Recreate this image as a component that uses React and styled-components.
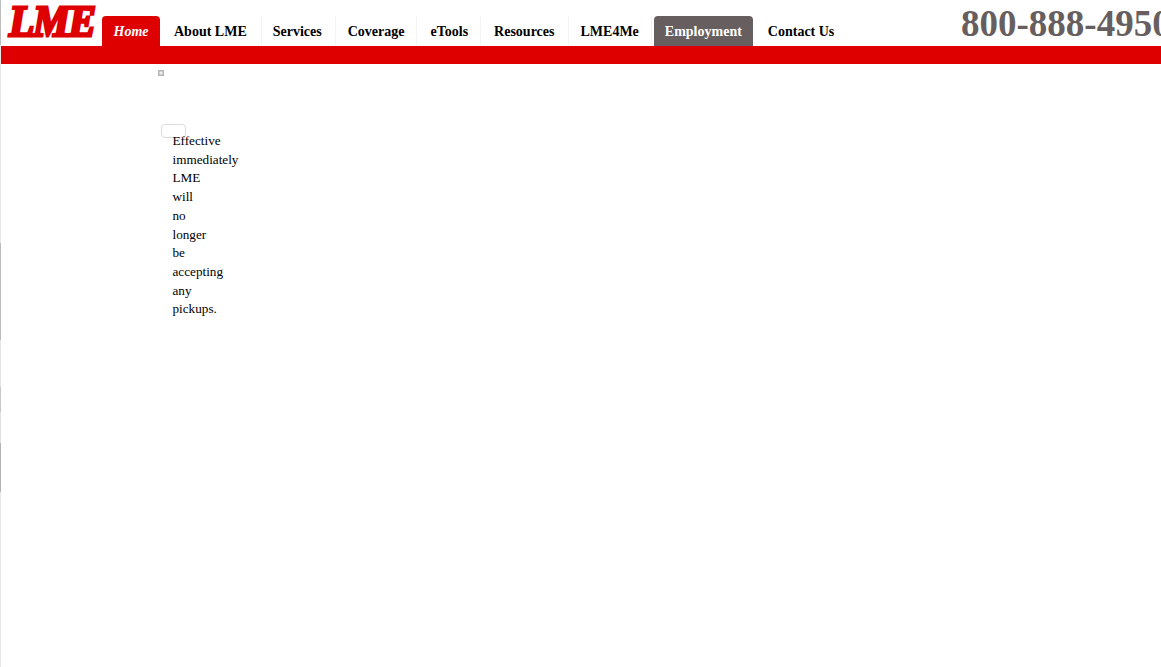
import React from "react";
import styled, { createGlobalStyle } from "styled-components";

const Global = createGlobalStyle`
  html, body { margin: 0; padding: 0; background: #fff; height: 100%; overflow: hidden; }
  body { font-family: "Liberation Serif", "Times New Roman", serif; color: #000; }
`;

const Page = styled.div`
  width: 1161px;
  height: 667px;
  overflow: hidden;
  box-sizing: border-box;
  border-left: 1px solid transparent;
  border-image: linear-gradient(
      to bottom,
      #bdbdbd 0 46px,
      #e8e8e8 46px 243px,
      #bbbbbb 243px 340px,
      #e4e4e4 340px 387px,
      #c8c8c8 387px 412px,
      #e0e0e0 412px 443px,
      #b4b4b4 443px 492px,
      #e8e8e8 492px 667px
    )
    1;
`;

const Header = styled.header`
  height: 46px;
  display: flex;
  align-items: flex-end;
  position: relative;
`;

const Logo = styled.div`
  width: 101px;
  height: 46px;
  flex: none;
`;

const Logotype = styled.span`
  display: inline-block;
  font: italic 700 47px/38px "Liberation Serif", serif;
  letter-spacing: -1.5px;
  color: #de0000;
  -webkit-text-stroke: 3px #de0000;
  white-space: nowrap;
  transform: translate(8px, 3px) scale(0.88, 0.94);
  transform-origin: 0 0;
`;

const Nav = styled.nav`
  display: flex;
  align-items: flex-end;
  height: 30px;
`;

const Tab = styled.a`
  height: 30px;
  box-sizing: border-box;
  padding: 1px ${(p) => p.$right}px 0 ${(p) => p.$left}px;
  display: flex;
  align-items: center;
  font-size: 14px;
  font-weight: 700;
  font-style: ${(p) => (p.$active ? "italic" : "normal")};
  white-space: nowrap;
  text-decoration: none;
  color: ${(p) => (p.$active || p.$hover ? "#fff" : "#000")};
  background: ${(p) => (p.$active ? "#de0000" : p.$hover ? "#675f5f" : "transparent")};
  border-radius: ${(p) => (p.$active || p.$hover ? "4px 4px 0 0" : "0")};
  margin-right: ${(p) => p.$gap ?? 0}px;
  border-right: ${(p) => (p.$sep ? "1px solid #f4f4f4" : "none")};
`;

const Phone = styled.div`
  position: absolute;
  left: 960px;
  top: 3px;
  font-size: 37px;
  line-height: 42px;
  font-weight: 700;
  color: #675f5f;
  white-space: nowrap;
`;

const RedBar = styled.div`
  height: 18px;
  background: #de0000;
`;

const Content = styled.main`
  padding: 6px 0 0 157px;
  position: relative;
`;

const BrokenImage = styled.svg`
  display: block;
  width: 6px;
  height: 6px;
`;

const Notice = styled.p`
  position: relative;
  margin: 56px 0 0;
  padding: 0 0 0 14.5px;
  width: 67px;
  word-spacing: 67px;
  font-size: 13.2px;
  line-height: 18.7px;
`;

const EmptyBox = styled.div`
  position: absolute;
  left: 160px;
  top: 60px;
  width: 25px;
  height: 14px;
  box-sizing: border-box;
  border: 1.5px solid #dcdcdc;
  border-radius: 4px;
`;

const items = [
  ["About LME", { $sep: true, $left: 14, $right: 14 }],
  ["Services", { $sep: true, $left: 11, $right: 13 }],
  ["Coverage", { $sep: true, $left: 12, $right: 12 }],
  ["eTools", { $sep: true, $left: 13, $right: 12 }],
  ["Resources", { $sep: true, $left: 13, $right: 13 }],
  ["LME4Me", { $sep: true, $left: 12, $right: 12, $gap: 2 }],
  ["Employment", { $hover: true, $left: 11, $right: 11 }],
  ["Contact Us", { $left: 15, $right: 15 }],
];

export default function App() {
  return (
    <Page>
      <Global />
      <Header>
        <Logo>
          <Logotype>LME</Logotype>
        </Logo>
        <Nav>
          <Tab href="#" $active $left={11.5} $right={11.5}>Home</Tab>
          {items.map(([label, props]) => (
            <Tab href="#" key={label} {...props}>{label}</Tab>
          ))}
        </Nav>
        <Phone>800-888-4950</Phone>
      </Header>
      <RedBar />
      <Content>
        <BrokenImage viewBox="0 0 6 6">
          <rect width="6" height="6" fill="#b5b5b5" />
          <rect x="1.5" y="1.5" width="3" height="3" fill="#eee" />
        </BrokenImage>
        <EmptyBox />
        <Notice>Effective immediately LME will no longer be accepting any pickups.</Notice>
      </Content>
    </Page>
  );
}
